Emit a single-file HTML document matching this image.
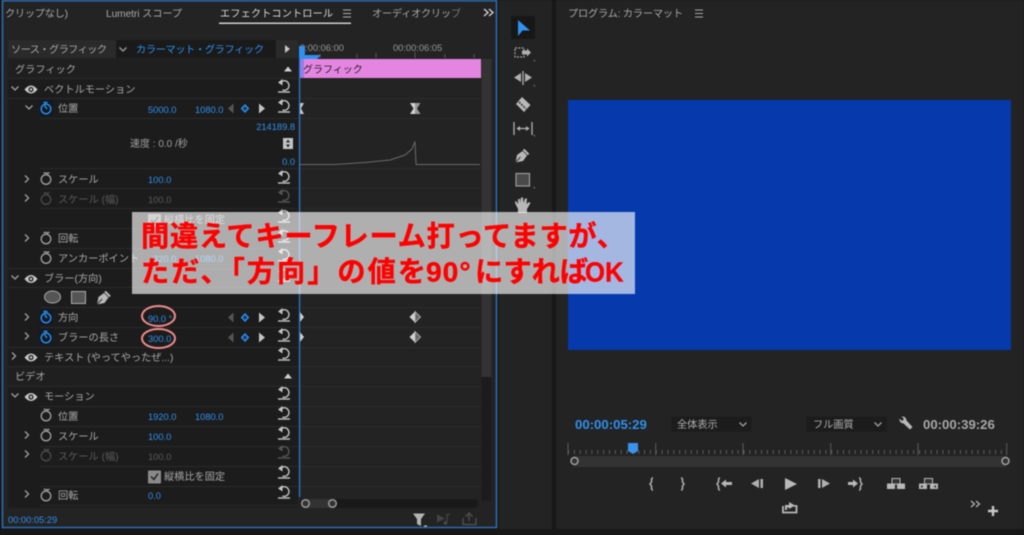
<!DOCTYPE html>
<html><head><meta charset="utf-8"><style>
html,body{margin:0;padding:0;background:#171717;width:1024px;height:535px;overflow:hidden}
svg{display:block;filter:blur(.4px)}
text{font-family:"Liberation Sans","Noto Sans CJK JP",sans-serif;font-size:10px;fill:#a0a0a0}
.b{fill:#2f90ee;font-size:9.300px}.d{fill:#5a5a5a;font-size:10.200px}.dn{fill:#5a5a5a;font-size:9.300px}.t{fill:#a8a8a8;font-size:10.200px}
.r{fill:#ff0000;font-size:28.200px;font-weight:bold;stroke:#ff0000;stroke-width:.4}
</style></head><body>
<svg width="1024" height="535" viewBox="0 0 1024 535" xmlns="http://www.w3.org/2000/svg">
<defs>
<g id="reset" fill="none" stroke="#c4c4c4" stroke-width="1.400"><path d="M-3.500 -4.500A4.800 4.800 0 1 1 -1.500 3"/><path d="M-1.500 -8L-6 -4.500L-1.500 -1.500Z" fill="#c4c4c4" stroke="none"/><path d="M-6 5H6"/></g>
<g id="resetd" fill="none" stroke="#555" stroke-width="1.400"><path d="M-3.500 -4.500A4.800 4.800 0 1 1 -1.500 3"/><path d="M-1.500 -8L-6 -4.500L-1.500 -1.500Z" fill="#555" stroke="none"/><path d="M-6 5H6"/></g>
<g id="sw" fill="none" stroke="#a0a0a0" stroke-width="1.300"><circle cx="0" cy="1" r="4.800"/><path d="M-2.500 -5.500H1.500M1 -4.500L3.500 -6"/></g>
<g id="swd" fill="none" stroke="#4a4a4a" stroke-width="1.300"><circle cx="0" cy="1" r="4.800"/><path d="M-2.500 -5.500H1.500M1 -4.500L3.500 -6"/></g>
<g id="swb"><rect x="-7" y="-8" width="14" height="16" fill="#111a25"/><g fill="none" stroke="#2f90ee" stroke-width="1.400"><circle cx="0" cy="1" r="4.800"/><path d="M-2.500 -5.500H1.500M-1.500 -2.500L1 1"/></g></g>
<path id="gt" d="M-2 -3.500L1.500 0L-2 3.500" fill="none" stroke="#a0a0a0" stroke-width="1.300"/>
<path id="gd" d="M-3.500 -1.500L0 2L3.500 -1.500" fill="none" stroke="#a0a0a0" stroke-width="1.300"/>
<g id="eye"><path d="M-6.500 0Q0 -8 6.500 0Q0 8 -6.500 0Z" fill="#c8c8c8"/><circle r="2.600" fill="#2a2a2a"/><circle r="1.200" fill="#c8c8c8"/></g>
<g id="kf"><path d="M-17 0L-11.500 -5V5Z" fill="#555"/><path d="M0 -3.500L3.300 0L0 3.500L-3.300 0Z" fill="#123a66" stroke="#2f90ee" stroke-width="1.400"/><path d="M14 -5V5L20 0Z" fill="#c4c4c4"/></g>
<g id="dia"><path d="M0 -5.500L-5.500 0L0 5.500Z" fill="#d0d0d0"/><path d="M0 -5.500L5.500 0L0 5.500Z" fill="#666" stroke="#bbb" stroke-width=".8"/></g>
<g id="pen"><path d="M-7 7L-5.500 -.5L0 -4.500L4.500 0L.5 5.500Z" fill="#b8b8b8"/><path d="M1 -6L6 -1" stroke="#b8b8b8" stroke-width="2.200"/><path d="M-7 7L-2 1.500" stroke="#333" stroke-width="1"/></g>
</defs>

<!-- panels -->
<rect x="0" y="0" width="1024" height="535" fill="#171717"/>
<rect x="2" y="0" width="495" height="528" fill="#232323"/>
<rect x="499" y="0" width="53" height="529" fill="#232323"/>
<rect x="556" y="0" width="468" height="529" fill="#232323"/>

<!-- left tabs -->
<text x="5" y="17" class="t" textLength="63">クリップなし)</text>
<text x="106" y="17" class="t" textLength="76">Lumetri スコープ</text>
<text x="220" y="17" style="fill:#d8d8d8;font-size:10.200px" textLength="113">エフェクトコントロール</text>
<path d="M343 10H351M343 13.500H351M343 17H351" stroke="#b0b0b0" stroke-width="1"/>
<rect x="219" y="22.500" width="132" height="1.500" fill="#d0d0d0"/>
<text x="372" y="17" class="t" textLength="89">オーディオクリッ<tspan fill="#777">ブ</tspan></text>
<path d="M484 9L488 12.500L484 16M489 9L493 12.500L489 16" fill="none" stroke="#d0d0d0" stroke-width="1.400"/>

<!-- source bar -->
<rect x="8" y="40" width="290" height="18" fill="#2a2a2a"/>
<rect x="116" y="40" width="160" height="18" fill="#1a1a1a"/>
<text x="11" y="53" class="t" textLength="96">ソース・グラフィック</text>
<use href="#gd" x="123" y="49"/>
<text x="136" y="53" style="fill:#2f90ee;font-size:10.200px" textLength="128">カラーマット・グラフィック</text>
<path d="M285 45V53L290 49Z" fill="#c8c8c8"/>

<!-- left rows -->
<rect x="8" y="59" width="290" height="449" fill="#1c1c1c"/>
<rect x="8" y="59" width="290" height="20" fill="#1f1f1f"/>
<rect x="8" y="366" width="290" height="20" fill="#1f1f1f"/>
<g stroke="#2a2a2a" stroke-width="1">
<path d="M8 78.500H298M8 98.500H298M40 118.500H298M40 168.500H298M40 188.500H298M40 208.500H298M40 228.500H298M40 248.500H298M8 268.500H298M8 287.500H298M40 307.500H298M40 327.500H298M8 347.500H298M8 366.500H298M8 386.500H298M40 406.500H298M40 426.500H298M40 446.500H298M40 466.500H298M40 486.500H298M40 505.500H298"/>
</g>

<text x="15" y="73" class="t">グラフィック</text>
<path d="M284 71.500L288 66.500L292 71.500Z" fill="#d0d0d0"/>
<use href="#gd" x="15" y="88"/><use href="#eye" x="31" y="89.500"/>
<text x="44" y="93" class="t">ベクトルモーション</text>
<use href="#reset" x="284" y="87"/>

<use href="#gd" x="29" y="107"/><use href="#swb" x="46" y="108"/>
<text x="58" y="112" class="t">位置</text>
<text x="148" y="113" class="b">5000.0</text><text x="195" y="113" class="b">1080.0</text>
<use href="#kf" x="245" y="108.500"/><use href="#reset" x="284" y="107"/>
<text x="295" y="130" text-anchor="end" class="b">214189.8</text>
<text x="130" y="147" style="fill:#a0a0a0">速度 : 0.0 /秒</text>
<rect x="283" y="138" width="10" height="11" fill="#c4c4c4"/>
<path d="M288 139.500L286 142.500H290ZM288 147.500L286 144.500H290Z" fill="#222"/>
<text x="295" y="165" text-anchor="end" class="b">0.0</text>

<use href="#gt" x="27" y="179"/><use href="#sw" x="46" y="178.500"/>
<text x="58" y="183" class="t">スケール</text><text x="148" y="183" class="b">100.0</text><use href="#reset" x="284" y="178"/>
<use href="#gt" x="27" y="198"/><use href="#swd" x="46" y="198.500"/>
<text x="58" y="203" class="d">スケール (幅)</text><text x="148" y="203" class="dn">100.0</text><use href="#resetd" x="284" y="197"/>
<rect x="148" y="214" width="13" height="13" rx="1" fill="#8a8a8a"/>
<path d="M151 220L154 223L158 217" fill="none" stroke="#222" stroke-width="1.500"/>
<text x="164" y="223" class="t">縦横比を固定</text><use href="#reset" x="284" y="217"/>
<use href="#gt" x="27" y="238"/><use href="#sw" x="46" y="238"/>
<text x="58" y="242" class="t">回転</text><use href="#reset" x="284" y="237"/>
<use href="#sw" x="46" y="257.500"/>
<text x="58" y="262" class="t">アンカーポイント</text><text x="153" y="262" class="b">320.0</text><text x="195" y="262" class="b">1080.0</text><use href="#reset" x="284" y="256"/>
<use href="#gd" x="15" y="277"/><use href="#eye" x="31" y="279"/>
<text x="44" y="282" class="t">ブラー(方向)</text><use href="#reset" x="284" y="276"/>

<ellipse cx="52.500" cy="297" rx="8" ry="6" fill="#555" stroke="#aaa"/>
<rect x="71.500" y="291.500" width="14" height="12" fill="#555" stroke="#aaa"/>
<use href="#pen" x="104" y="297.500"/>

<use href="#gt" x="27" y="317"/><use href="#swb" x="46" y="317"/>
<text x="58" y="321" class="t">方向</text><text x="148" y="322" class="b">90.0 °</text>
<use href="#kf" x="245" y="317.500"/><use href="#reset" x="284" y="316"/>
<use href="#gt" x="27" y="336"/><use href="#swb" x="46" y="337"/>
<text x="58" y="341" class="t">ブラーの長さ</text><text x="148" y="342" class="b">300.0</text>
<use href="#kf" x="245" y="337.500"/><use href="#reset" x="284" y="336"/>
<ellipse cx="158.500" cy="316" rx="16.500" ry="10" fill="none" stroke="#f08a8a" stroke-width="2"/>
<ellipse cx="158.500" cy="338.500" rx="16.500" ry="9.500" fill="none" stroke="#f08a8a" stroke-width="2"/>

<use href="#gt" x="14" y="356"/><use href="#eye" x="31" y="357.500"/>
<text x="44" y="361" class="t">テキスト (やってやったぜ...)</text><use href="#reset" x="284" y="355"/>
<text x="15" y="380" class="t">ビデオ</text>
<path d="M284 378.500L288 373.500L292 378.500Z" fill="#d0d0d0"/>
<use href="#gd" x="15" y="395"/><use href="#eye" x="31" y="397"/>
<text x="44" y="400" class="t">モーション</text><use href="#reset" x="284" y="394"/>
<use href="#sw" x="46" y="415"/>
<text x="58" y="420" class="t">位置</text><text x="148" y="420" class="b">1920.0</text><text x="195" y="420" class="b">1080.0</text><use href="#reset" x="284" y="414"/>
<use href="#gt" x="27" y="435"/><use href="#sw" x="46" y="435"/>
<text x="58" y="440" class="t">スケール</text><text x="148" y="440" class="b">100.0</text><use href="#reset" x="284" y="434"/>
<use href="#gt" x="27" y="454"/><use href="#swd" x="46" y="455"/>
<text x="58" y="460" class="d">スケール (幅)</text><text x="148" y="460" class="dn">100.0</text><use href="#resetd" x="284" y="453"/>
<rect x="148" y="470.500" width="13" height="13" rx="1" fill="#8a8a8a"/>
<path d="M151 476.500L154 479.500L158 473.500" fill="none" stroke="#222" stroke-width="1.500"/>
<text x="164" y="480" class="t">縦横比を固定</text><use href="#reset" x="284" y="473"/>
<use href="#gt" x="27" y="494"/><use href="#sw" x="46" y="495"/>
<text x="58" y="499" class="t">回転</text><text x="148" y="499" class="b">0.0</text><use href="#reset" x="284" y="493"/>
<rect x="8" y="508" width="290" height="18" fill="#232323"/>
<text x="8" y="523" class="b">00:00:05:29</text>

<!-- timeline -->
<text x="300" y="51" style="fill:#999;font-size:9.300px">0:00:06:00</text>
<text x="393" y="51" style="fill:#999;font-size:9.300px">00:00:06:05</text>
<path d="M320 54V58M357 54V58M376 53V58M415 52V58M445 54V58M474 54V58" stroke="#555"/>
<rect x="300" y="59" width="181" height="19" fill="#e585e2"/>
<rect x="300" y="59" width="4" height="19" fill="#9080e8"/>
<text x="303" y="73" style="fill:#222;font-size:10px">グラフィック</text>
<rect x="481.500" y="59" width="10" height="318" fill="#333"/>
<rect x="481.500" y="377" width="10" height="124" fill="#1c1c1c"/>
<g stroke="#2b2b2b"><path d="M300 98.500H481M300 118.500H481M300 168.500H481M300 188.500H481M300 208.500H481M300 307.500H481M300 327.500H481M300 347.500H481M300 366.500H481M300 386.500H481M300 406.500H481M300 426.500H481M300 446.500H481M300 466.500H481M300 486.500H481"/></g>
<path d="M300 103H304L301 108.500L304 114H300Z" fill="#c8c8c8"/>
<path d="M415 103H410L413.500 108.500L410 114H415Z" fill="#d0d0d0"/><path d="M415 103H420.500L417 108.500L420.500 114H415Z" fill="#999"/>
<path d="M300 164.500H335L365 162.500L390 160L405 155L412 149L415 141.500L416 164.500H480" fill="none" stroke="#6a6a6a" stroke-width="1"/>
<use href="#dia" x="415" y="317"/><use href="#dia" x="415" y="337"/>
<path d="M300 312L304 317L300 322ZM300 332L304 337L300 342Z" fill="#d0d0d0"/>
<rect x="299" y="50" width="1.200" height="447" fill="#2d7cd0"/>
<path d="M299 46H305V54L302.500 58H299Z" fill="#2f90ee"/><path d="M300 55H321L317 59H300Z" fill="#2f90ee"/>
<rect x="300" y="499" width="178" height="9" rx="4" fill="#191919"/>
<rect x="302" y="499" width="34" height="9" rx="4" fill="#333"/>
<circle cx="305.500" cy="503.500" r="3.800" fill="#333" stroke="#9a9a9a" stroke-width="1.500"/>
<circle cx="332.500" cy="503.500" r="3.800" fill="#333" stroke="#9a9a9a" stroke-width="1.500"/>
<path d="M413 513.500H425L421 519V526L417 524V519Z" fill="#b4b4b4"/>
<path d="M423.500 525.500H427.500L425.500 527.500Z" fill="#ccc"/>
<path d="M437 514.500V522.500L445 518.500Z" fill="#444"/><path d="M447 523V514.500H450" fill="none" stroke="#444" stroke-width="1.300"/><circle cx="445.500" cy="523" r="2" fill="#444"/>
<path d="M463 518H463V524.500H476V518M469 521V513M465.500 516.500L469 513L472.500 516.500" fill="none" stroke="#4c4c4c" stroke-width="1.500"/>

<!-- panel border -->
<path d="M2.500 0V527.500H496.500V0" fill="none" stroke="#2c6cb0" stroke-width="1.600"/>
<rect x="2" y="0" width="495" height="1.500" fill="#2c6cb0"/>

<!-- tools -->
<rect x="511" y="16" width="24" height="23" fill="#171717"/>
<path d="M518 20V36L522.500 30.500H530Z" fill="#2f90ee"/>
<rect x="515" y="48" width="9" height="9" fill="none" stroke="#a8a8a8" stroke-width="1.200" stroke-dasharray="2 1.300"/>
<path d="M522 50.500H527V48.500L531 52.500L527 56.500V54.500H522Z" fill="#b0b0b0"/>
<path d="M514 77.500L521 73V82ZM532 77.500L525 73V82Z" fill="#b0b0b0"/>
<path d="M523 71V85" stroke="#b0b0b0" stroke-width="1.300"/>
<path d="M516 104L522 97L530.500 105L524 112Z" fill="#b8b8b8"/>
<path d="M519 102L526 109" stroke="#333" stroke-width="1.500" stroke-dasharray="2 1"/>
<path d="M514 122V135M532 122V135M517 128.500H529" stroke="#b0b0b0" stroke-width="1.300"/>
<path d="M516.500 128.500L520 126V131ZM529.500 128.500L526 126V131Z" fill="#b0b0b0"/>
<use href="#pen" x="522.500" y="155.500"/>
<rect x="516" y="173.500" width="13.500" height="12.500" fill="#4a4a4a" stroke="#9a9a9a" stroke-width="1.200"/>
<path d="M516 205Q514 201 516 201L518 204V199H520V203L521 197.500H523L523.500 203L525 198.500H527L526.500 204L529 202L530.500 203L527 209V213H518V209Z" fill="#b8b8b8"/>
<path d="M533 60L535 60L535 62ZM533 85L535 85V87ZM533 135L535 135V137ZM533 187L535 187V189Z" fill="#777"/>

<!-- program monitor -->
<text x="568" y="17" class="t" textLength="115">プログラム: カラーマット</text>
<path d="M695 10H703M695 13.500H703M695 17H703" stroke="#a8a8a8" stroke-width="1"/>
<rect x="568" y="100" width="443" height="250" fill="#0539ac"/>

<text x="575" y="429" style="fill:#2f90ee;font-size:13.200px;font-weight:bold">00:00:05:29</text>
<rect x="671.500" y="416.500" width="80" height="15.500" fill="#1c1c1c"/>
<text x="677" y="428" style="fill:#b0b0b0;font-size:10.200px">全体表示</text>
<use href="#gd" x="743" y="424"/>
<rect x="806" y="416.500" width="81" height="15.500" fill="#1c1c1c"/>
<text x="813" y="428" style="fill:#b0b0b0;font-size:10.200px">フル画質</text>
<use href="#gd" x="878" y="424"/>
<path d="M899.500 418.500L902 421L904 419L901.500 416.500Q906 416 906.500 420.500L912.500 427L910 429.500L903.500 423.500Q899 423 899.500 418.500Z" fill="#b8b8b8"/>
<text x="923" y="429" style="fill:#a8a8a8;font-size:13.200px;font-weight:bold">00:00:39:26</text>

<path d="M568 443V455M655.700 443V455M743 443V455M830.700 443V455M918 443V455M1006.700 443V455" stroke="#5c5c5c"/>
<path d="M568 452H1007" stroke="#5c5c5c" stroke-width="4" stroke-dasharray="1 4.850" fill="none"/>
<rect x="574" y="456" width="432" height="11" fill="#333"/>
<circle cx="574.500" cy="461" r="3.500" fill="#333" stroke="#a0a0a0" stroke-width="1.500"/>
<circle cx="1005.500" cy="461" r="3.500" fill="#333" stroke="#a0a0a0" stroke-width="1.500"/>
<path d="M628 443H638V451L633 454L628 451Z" fill="#3b92ec"/>

<g fill="none" stroke="#b0b0b0" stroke-width="1.500">
<path d="M653 478Q651.500 478 651.500 480V482L650 484L651.500 486V488Q651.500 490 653 490"/>
<path d="M681 478Q682.500 478 682.500 480V482L684 484L682.500 486V488Q682.500 490 681 490"/>
<path d="M720 478Q718.500 478 718.500 480V482L717 484L718.500 486V488Q718.500 490 720 490"/>
<path d="M859 478Q860.500 478 860.500 480V482L862 484L860.500 486V488Q860.500 490 859 490"/>
</g>
<path d="M721 483.500L726 479.500V482H732V485H726V487.500Z" fill="#b8b8b8"/>
<path d="M858 483.500L853 479.500V482H848V485H853V487.500Z" fill="#b8b8b8"/>
<path d="M751 483.500L759 479V488ZM760.500 479H763V488H760.500Z" fill="#b0b0b0"/>
<path d="M785 478V490L797 484Z" fill="#b8b8b8"/>
<path d="M818 479H820.500V488H818ZM822 479V488L830 483.500Z" fill="#b0b0b0"/>
<path d="M887 483.500H895V489H887ZM897 483.500H905V489H897Z" fill="#b8b8b8"/><rect x="892" y="478.500" width="8" height="5.500" fill="#333" stroke="#b8b8b8"/>
<path d="M919 483.500H927V489H919ZM930 483.500H938V489H930Z" fill="#b8b8b8"/><rect x="924.500" y="478.500" width="8" height="5.500" fill="#333" stroke="#b8b8b8"/><path d="M921 485L923.500 486.500L921 488ZM936 485L933.500 486.500L936 488Z" fill="#333"/>
<path d="M783 506V512.500H796.500V506H794" fill="none" stroke="#b8b8b8" stroke-width="1.800"/>
<path d="M785 505H789V502L795 505.500L789 509V507.500H787V510H785Z" fill="#b8b8b8"/>
<path d="M971 501L974.500 504L971 507M976 501L979.500 504L976 507" fill="none" stroke="#b8b8b8" stroke-width="1.200"/>
<path d="M993 506V516M988 511H998" stroke="#c8c8c8" stroke-width="2.400"/>

<!-- annotation -->
<rect x="132" y="212" width="503" height="82" fill="#fff" fill-opacity=".64"/>
<text x="141" y="246" class="r" textLength="484" lengthAdjust="spacing">間違えてキーフレーム打ってますが、</text>
<text y="281.500" class="r"><tspan x="141" textLength="285">ただ、「方向」の値を</tspan><tspan x="426" letter-spacing="1">90°</tspan><tspan x="475">にすれば</tspan></text>
<text x="585" y="281.500" class="r" textLength="38.500" lengthAdjust="spacingAndGlyphs">OK</text>
</svg>
</body></html>
